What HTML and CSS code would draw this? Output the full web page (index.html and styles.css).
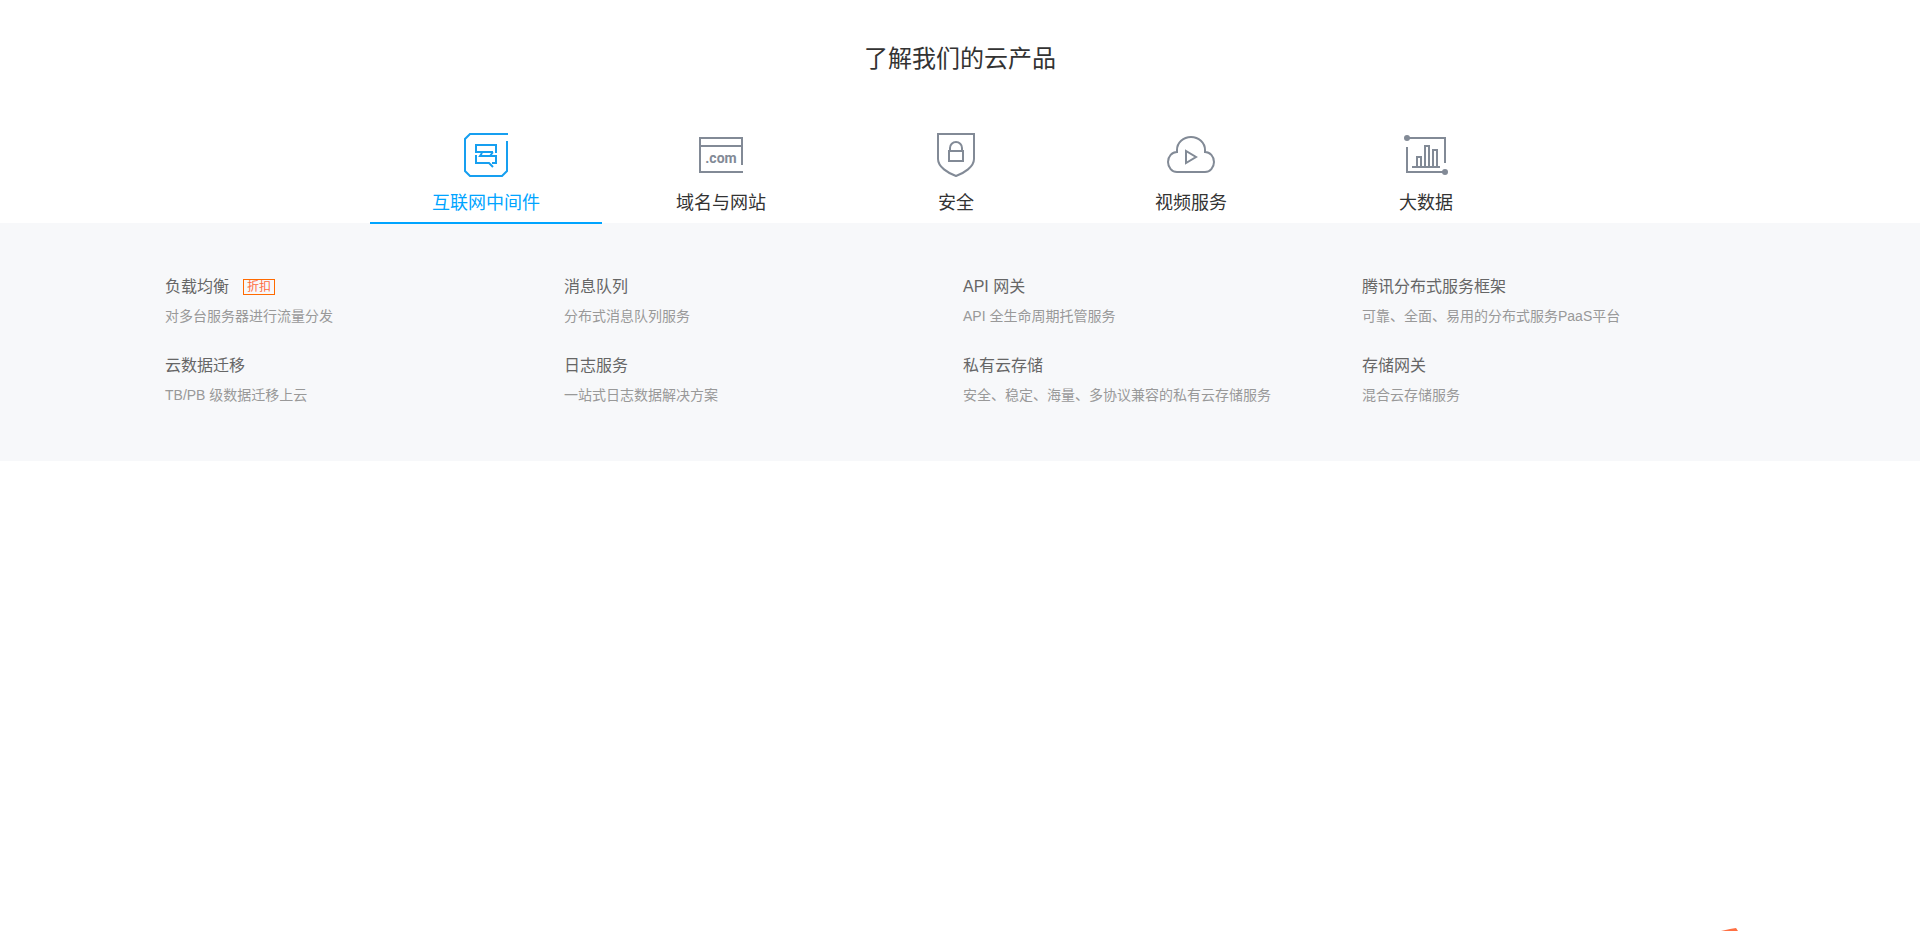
FILE: index.html
```html
<!DOCTYPE html>
<html lang="zh-CN">
<head>
<meta charset="utf-8">
<title>了解我们的云产品</title>
<link rel="stylesheet" href="styles.css">
</head>
<body>
<main class="products">
  <h2 class="products-title">了解我们的云产品</h2>
  <div class="tabs" role="tablist">
    <button class="tab tab-active" type="button" role="tab" aria-selected="true" aria-controls="panel">
      <svg class="tab-icon" viewBox="0 0 48 48" aria-hidden="true"><path d="M46 3H8L3 8v32l5 5h32l5-5V10"/><path d="M14 22v-8h20v8M13 21h18M35 25H18l2-3M28 25l3-4M14 24v8h13l4 4M34 24v8h-4"/></svg>
      <span>互联网中间件</span>
    </button>
    <button class="tab" type="button" role="tab" aria-selected="false">
      <svg class="tab-icon" viewBox="0 0 48 48" aria-hidden="true"><path d="M45 34V7H3v34h43M3 15h42"/><text class="icon-text" x="24" y="32">.com</text></svg>
      <span>域名与网站</span>
    </button>
    <button class="tab" type="button" role="tab" aria-selected="false">
      <svg class="tab-icon" viewBox="0 0 48 48" aria-hidden="true"><path d="M6 3h36v25c0 8-10 14-18 17C16 42 6 36 6 28zM17 20h14v10H17zM18 20v-3a6 6 0 0 1 12 0v3"/></svg>
      <span>安全</span>
    </button>
    <button class="tab" type="button" role="tab" aria-selected="false">
      <svg class="tab-icon" viewBox="0 0 48 48" aria-hidden="true"><path d="M10 41a9 10 0 0 1 0-20v-2a14 13 0 0 1 28 0v2a9 10 0 0 1 0 20zM19 20v12l10-6z"/></svg>
      <span>视频服务</span>
    </button>
    <button class="tab" type="button" role="tab" aria-selected="false">
      <svg class="tab-icon" viewBox="0 0 48 48" aria-hidden="true"><path d="M5 7h38v25M5 16v25h38M10 36h28M15 36V26h4v10M23 36V15h4v21M31 36V19h4v17"/><circle class="dot" cx="5" cy="7" r="3"/><circle class="dot" cx="43" cy="41" r="3"/></svg>
      <span>大数据</span>
    </button>
  </div>
  <section class="panel" id="panel" role="tabpanel">
    <ul class="grid">
      <li><a class="item" href="#"><h3 class="item-title">负载均衡<span class="badge">折扣</span></h3><p class="item-desc">对多台服务器进行流量分发</p></a></li>
      <li><a class="item" href="#"><h3 class="item-title">消息队列</h3><p class="item-desc">分布式消息队列服务</p></a></li>
      <li><a class="item" href="#"><h3 class="item-title">API 网关</h3><p class="item-desc">API 全生命周期托管服务</p></a></li>
      <li><a class="item" href="#"><h3 class="item-title">腾讯分布式服务框架</h3><p class="item-desc">可靠、全面、易用的分布式服务PaaS平台</p></a></li>
      <li><a class="item" href="#"><h3 class="item-title">云数据迁移</h3><p class="item-desc">TB/PB 级数据迁移上云</p></a></li>
      <li><a class="item" href="#"><h3 class="item-title">日志服务</h3><p class="item-desc">一站式日志数据解决方案</p></a></li>
      <li><a class="item" href="#"><h3 class="item-title">私有云存储</h3><p class="item-desc">安全、稳定、海量、多协议兼容的私有云存储服务</p></a></li>
      <li><a class="item" href="#"><h3 class="item-title">存储网关</h3><p class="item-desc">混合云存储服务</p></a></li>
    </ul>
  </section>
</main>
<svg class="corner-mark" viewBox="0 0 17 3" aria-hidden="true"><path d="M0 3L9 1l6-1 2 3z"/></svg>
</body>
</html>
```
FILE: styles.css
```css
* { box-sizing: border-box; }

body {
  margin: 0;
  background: #fff;
  color: #333;
  font-family: "Liberation Sans", "Noto Sans CJK SC", sans-serif;
}

h2, h3, p, ul { margin: 0; padding: 0; font-weight: inherit; }
ul { list-style: none; }

.products-title {
  padding-top: 41px;
  font-size: 24px;
  line-height: 36px;
  text-align: center;
}

.tabs {
  display: flex;
  gap: 3px;
  max-width: 1180px;
  margin: 51px auto 0;
}

.tab {
  position: relative;
  display: flex;
  flex: 0 1 232px;
  flex-direction: column;
  align-items: center;
  gap: 10px;
  padding: 3px 0 5px;
  border: 0;
  border-bottom: 2px solid transparent;
  background: none;
  color: #333;
  font: inherit;
  font-size: 18px;
  line-height: 28px;
  cursor: pointer;
}

.tab-active { border-color: #00a4ff; color: #00a4ff; }

.tab-icon {
  width: 48px;
  height: 48px;
  fill: none;
  stroke: #828a96;
  stroke-width: 2;
}

.tab-active .tab-icon { stroke: #169ff0; }
.dot { fill: #828a96; stroke: none; }

.icon-text {
  fill: #828a96;
  stroke: none;
  font-family: Roboto, sans-serif;
  font-size: 14px;
  font-weight: 700;
  text-anchor: middle;
}

.panel {
  margin-top: -1px;
  padding: 49px 24px 51px;
  background: #f7f8fa;
}

.grid {
  display: grid;
  grid-template-columns: repeat(4, 1fr);
  gap: 20px 6px;
  max-width: 1590px;
  margin: 0 auto;
}

.item { display: block; text-decoration: none; }

.item-title {
  display: flex;
  align-items: center;
  gap: 14px;
  color: #666;
  font-size: 16px;
  line-height: 30px;
}

.item-desc { color: #999; font-size: 14px; line-height: 29px; }

.badge {
  padding: 0 3px;
  border: 1px solid #ff6a00;
  color: #ff6a3c;
  font-size: 12px;
  line-height: 14px;
}

.corner-mark {
  position: fixed;
  right: 182px;
  bottom: 0;
  width: 17px;
  height: 3px;
  fill: #ff7043;
}
```
